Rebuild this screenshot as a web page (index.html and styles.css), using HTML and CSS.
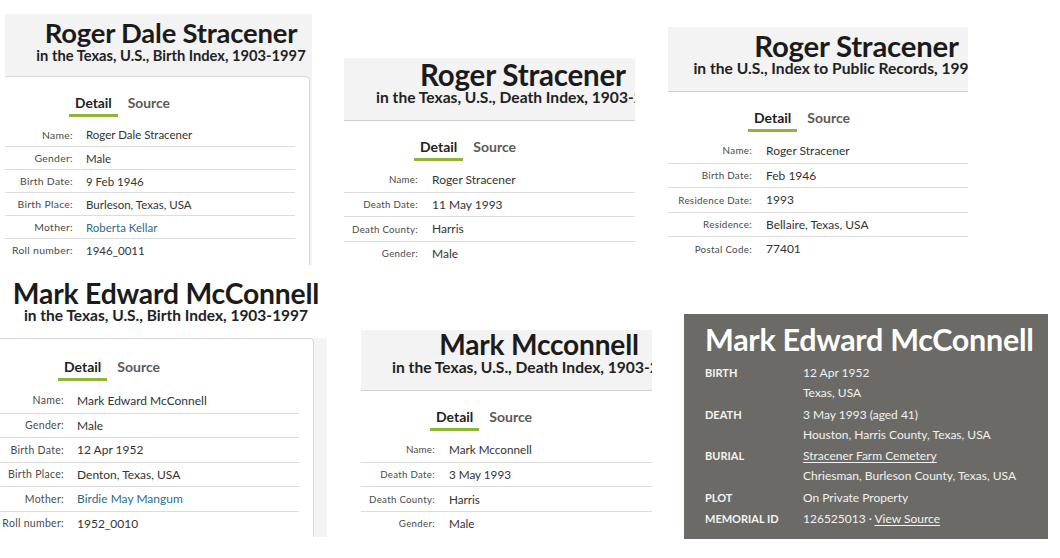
FILE: index.html
```html
<!DOCTYPE html>
<html lang="en">
<head>
<meta charset="utf-8">
<title>Record collage</title>
<link rel="stylesheet" href="styles.css">
</head>
<body>
<main class="canvas">

  <section class="rec rec-1">
    <header class="head">
      <h1 class="title">Roger Dale Stracener</h1>
      <p class="sub">in the Texas, U.S., Birth Index, 1903-1997</p>
    </header>
    <div class="body card">
      <nav class="tabs"><span class="tab on">Detail</span><span class="tab">Source</span></nav>
      <div class="facts">
        <div class="row"><span class="lab">Name:</span><span class="val">Roger Dale Stracener</span></div>
        <div class="row"><span class="lab">Gender:</span><span class="val">Male</span></div>
        <div class="row"><span class="lab">Birth Date:</span><span class="val">9 Feb 1946</span></div>
        <div class="row"><span class="lab">Birth Place:</span><span class="val">Burleson, Texas, USA</span></div>
        <div class="row"><span class="lab">Mother:</span><span class="val link">Roberta Kellar</span></div>
        <div class="row"><span class="lab">Roll number:</span><span class="val">1946_0011</span></div>
      </div>
    </div>
  </section>

  <section class="rec rec-2">
    <header class="head ruled">
      <h1 class="title">Roger Stracener</h1>
      <p class="sub">in the Texas, U.S., Death Index, 1903-2000</p>
    </header>
    <div class="body">
      <nav class="tabs"><span class="tab on">Detail</span><span class="tab">Source</span></nav>
      <div class="facts">
        <div class="row"><span class="lab">Name:</span><span class="val">Roger Stracener</span></div>
        <div class="row"><span class="lab">Death Date:</span><span class="val">11 May 1993</span></div>
        <div class="row"><span class="lab">Death County:</span><span class="val">Harris</span></div>
        <div class="row"><span class="lab">Gender:</span><span class="val">Male</span></div>
      </div>
    </div>
  </section>

  <section class="rec rec-3">
    <header class="head ruled">
      <h1 class="title">Roger Stracener</h1>
      <p class="sub">in the U.S., Index to Public Records, 1994-2019</p>
    </header>
    <div class="body">
      <nav class="tabs"><span class="tab on">Detail</span><span class="tab">Source</span></nav>
      <div class="facts">
        <div class="row"><span class="lab">Name:</span><span class="val">Roger Stracener</span></div>
        <div class="row"><span class="lab">Birth Date:</span><span class="val">Feb 1946</span></div>
        <div class="row"><span class="lab">Residence Date:</span><span class="val">1993</span></div>
        <div class="row"><span class="lab">Residence:</span><span class="val">Bellaire, Texas, USA</span></div>
        <div class="row"><span class="lab">Postal Code:</span><span class="val">77401</span></div>
      </div>
    </div>
  </section>

  <section class="rec rec-4">
    <header class="head">
      <h1 class="title">Mark Edward McConnell</h1>
      <p class="sub">in the Texas, U.S., Birth Index, 1903-1997</p>
    </header>
    <div class="well">
      <div class="body card">
        <nav class="tabs"><span class="tab on">Detail</span><span class="tab">Source</span></nav>
        <div class="facts">
          <div class="row"><span class="lab">Name:</span><span class="val">Mark Edward McConnell</span></div>
          <div class="row"><span class="lab">Gender:</span><span class="val">Male</span></div>
          <div class="row"><span class="lab">Birth Date:</span><span class="val">12 Apr 1952</span></div>
          <div class="row"><span class="lab">Birth Place:</span><span class="val">Denton, Texas, USA</span></div>
          <div class="row"><span class="lab">Mother:</span><span class="val link">Birdie May Mangum</span></div>
          <div class="row"><span class="lab">Roll number:</span><span class="val">1952_0010</span></div>
        </div>
      </div>
    </div>
  </section>

  <section class="rec rec-5">
    <header class="head ruled">
      <h1 class="title">Mark Mcconnell</h1>
      <p class="sub">in the Texas, U.S., Death Index, 1903-2000</p>
    </header>
    <div class="body">
      <nav class="tabs"><span class="tab on">Detail</span><span class="tab">Source</span></nav>
      <div class="facts">
        <div class="row"><span class="lab">Name:</span><span class="val">Mark Mcconnell</span></div>
        <div class="row"><span class="lab">Death Date:</span><span class="val">3 May 1993</span></div>
        <div class="row"><span class="lab">Death County:</span><span class="val">Harris</span></div>
        <div class="row"><span class="lab">Gender:</span><span class="val">Male</span></div>
      </div>
    </div>
  </section>

  <section class="grave">
    <h1 class="g-title">Mark Edward McConnell</h1>
    <dl class="g-facts">
      <div class="g-row"><dt>BIRTH</dt><dd><span>12 Apr 1952</span><span>Texas, USA</span></dd></div>
      <div class="g-row"><dt>DEATH</dt><dd><span>3 May 1993 (aged 41)</span><span>Houston, Harris County, Texas, USA</span></dd></div>
      <div class="g-row"><dt>BURIAL</dt><dd><span class="u">Stracener Farm Cemetery</span><span>Chriesman, Burleson County, Texas, USA</span></dd></div>
      <div class="g-row"><dt>PLOT</dt><dd><span>On Private Property</span></dd></div>
      <div class="g-row"><dt>MEMORIAL ID</dt><dd><span>126525013 · <span class="u">View Source</span></span></dd></div>
    </dl>
  </section>

</main>
</body>
</html>
```

FILE: styles.css
```css
* { box-sizing: border-box; }
html, body { margin: 0; padding: 0; background: #fff; }
body { font-family: "Lato", "Noto Sans", sans-serif; color: #222; }

.canvas {
  position: relative;
  width: 1060px;
  height: 558px;
  overflow: hidden;
  background: #fff;
}

/* ---- Ancestry record snippets ---- */
.rec {
  position: absolute;
  overflow: hidden;
  display: flex;
  flex-direction: column;
  background: #fff;
}
.head {
  flex: none;
  text-align: center;
  white-space: nowrap;
  background: #f3f3f3;
}
.head.ruled { border-bottom: 1px solid #cfcfcf; }
.title {
  margin: 0;
  font-weight: 700;
  color: #1b1b1b;
  letter-spacing: -0.2px;
}
.sub {
  margin: 0;
  font-weight: 700;
  color: #222;
}

.body { flex: 1; background: #fff; }
.card {
  border: 1px solid #d7d7d7;
  border-bottom: none;
  border-radius: 0 5px 0 0;
}

.tabs {
  display: flex;
  gap: 4px;
}
.tab {
  padding: 0 6px 2px;
  line-height: 18px;
  font-size: 14px;
  font-weight: 700;
  color: #5a5a5a;
  border-bottom: 3px solid transparent;
}
.tab.on { color: #222; border-bottom-color: #8fb43a; }

.facts { margin-top: 6px; }
.row {
  display: grid;
  align-items: center;
  border-top: 1px solid #dcdcdc;
}
.row:first-child { border-top: none; }
.lab {
  text-align: right;
  font-size: 9.7px;
  letter-spacing: 0.3px;
  color: #4a4a4a;
}
.val {
  font-size: 12px;
  color: #333;
}
.val.link { color: #2e6c86; }

/* panel 1 */
.rec-1 { left: 5px; top: 14px; width: 307px; height: 251px; background: #f3f3f3; }
.rec-1 .head { width: 332px; height: 62px; padding-top: 5px; }
.rec-1 .title { font-size: 27.4px; line-height: 28px; }
.rec-1 .sub { font-size: 14.7px; line-height: 16px; }
.rec-1 .card { margin-left: -1px; width: 306px; padding-right: 14px; }
.rec-1 .tabs { padding: 17px 0 0 64px; }
.rec-1 .tab { font-size: 13.8px; }
.rec-1 .row { grid-template-columns: 68px 1fr; column-gap: 13px; height: 23px; }
.rec-1 .lab { font-size: 10.4px; }
.rec-1 .val { font-size: 11.5px; }

/* panel 2 */
.rec-2 { left: 344px; top: 58px; width: 291px; height: 206px; }
.rec-2 .head { width: 358px; height: 63px; padding-top: 3px; }
.rec-2 .title { font-size: 29.5px; line-height: 28px; }
.rec-2 .sub { font-size: 15.6px; line-height: 16px; }
.rec-2 .tabs { padding: 17px 0 0 70px; }
.rec-2 .row { grid-template-columns: 74px 1fr; column-gap: 14px; height: 24.5px; }

/* panel 3 */
.rec-3 { left: 668px; top: 27px; width: 300px; height: 235px; }
.rec-3 .head { width: 377px; height: 65px; padding-top: 5px; }
.rec-3 .title { font-size: 29.3px; line-height: 28px; }
.rec-3 .sub { font-size: 15.6px; line-height: 16px; }
.rec-3 .tabs { padding: 17px 0 0 80px; }
.rec-3 .row { grid-template-columns: 84px 1fr; column-gap: 14px; height: 24.5px; }
.rec-3 .lab { font-size: 9.8px; }

/* panel 4 */
.rec-4 { left: 0; top: 280px; width: 327px; height: 257px; }
.rec-4 .head { width: 332px; height: 58px; padding-top: 0; background: #fff; }
.rec-4 .title { font-size: 28.3px; line-height: 27px; }
.rec-4 .sub { font-size: 15.5px; line-height: 16px; }
.rec-4 .well { flex: 1; display: flex; background: #f4f4f4; }
.rec-4 .card { margin-left: -1px; flex: none; width: 315px; padding-right: 14px; }
.rec-4 .tabs { padding: 19px 0 0 58px; }
.rec-4 .facts { margin-top: 7px; }
.rec-4 .row { grid-template-columns: 64px 1fr; column-gap: 13px; height: 24.5px; }
.rec-4 .lab { font-size: 10.5px; }
.rec-4 .val { font-size: 12px; }

/* panel 5 */
.rec-5 { left: 361px; top: 330px; width: 291px; height: 210px; }
.rec-5 .head { width: 356px; height: 61px; padding-top: 0; }
.rec-5 .title { font-size: 28.1px; line-height: 28px; }
.rec-5 .sub { font-size: 15.6px; line-height: 18px; }
.rec-5 .tabs { padding: 17px 0 0 69px; }
.rec-5 .row { grid-template-columns: 74px 1fr; column-gap: 14px; height: 24.5px; }
.rec-5 .val { font-size: 11.7px; }

/* ---- Find a Grave snippet ---- */
.grave {
  position: absolute;
  left: 684px;
  top: 314px;
  width: 364px;
  height: 225px;
  background: #6b6a66;
  color: #f2f2f0;
  padding: 9px 0 0 21px;
}
.g-title {
  margin: 0;
  font-size: 30.5px;
  line-height: 32px;
  font-weight: 700;
  color: #fff;
  letter-spacing: -0.3px;
}
.g-facts { margin: 0; padding-top: 8px; }
.g-row {
  display: grid;
  grid-template-columns: 98px 1fr;
  margin-bottom: 1.5px;
}
.g-row dt {
  font-size: 11px;
  font-weight: 700;
  line-height: 20px;
  color: #f4f4f2;
}
.g-row dd {
  margin: 0;
  display: flex;
  flex-direction: column;
  font-size: 12px;
  line-height: 20px;
}
.u { text-decoration: underline; text-underline-offset: 2px; }
```
